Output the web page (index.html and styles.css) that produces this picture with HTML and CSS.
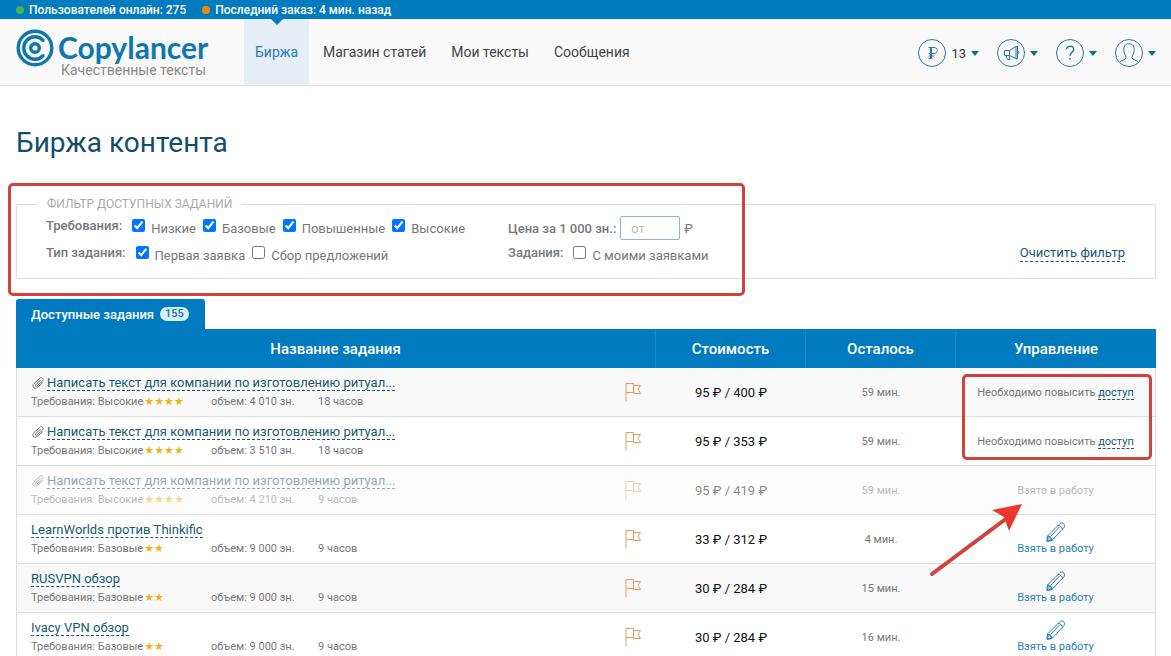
FILE: index.html
```html
<!DOCTYPE html>
<html lang="ru">
<head>
  <meta charset="UTF-8">
  <meta name="viewport" content="width=device-width, initial-scale=1.0">
  <title>Биржа контента - Copylancer</title>
  <link rel="stylesheet" href="styles.css">
</head>
<body>
  <!-- Icons -->
  <svg class="sprite" aria-hidden="true">
    <symbol id="clip" viewBox="0 0 14 14">
      <path d="M9.500 4 4.500 9c-.8.8.4 2 1.200 1.200L11.500 5c1.800-2-.8-4.500-2.700-2.700L3 7.500c-2.800 2.500.2 6.500 3.200 4L12 6.500"/>
    </symbol>
    <symbol id="flag" viewBox="0 0 16 19">
      <path d="M1 18.500V.5h7.500v9H1M8.500 2.500h7L13 6l2.500 4.500h-7v-1"/>
    </symbol>
    <symbol id="pencil" viewBox="0 0 20 20">
      <path d="M1 19.500 1.500 14 14 1.500c2.500-2 6 1.500 4 4L6 18.500zM12 3.500c2.500 0 4.500 2 4.500 4.200M1.500 14c2.500 0 4.500 2 4.500 4.500M4.500 14.500 13.500 5"/>
      <path class="tip" d="M1.500 14.500 4.500 15.500 5.500 18.200 1.200 19z"/>
    </symbol>
  </svg>

  <div class="topbar">
    <span class="dot green"></span><span class="online">Пользователей онлайн: 275</span>
    <span class="dot orange"></span><span>Последний заказ: 4 мин. назад</span>
  </div>

  <header>
    <a class="logo" href="#">
      <svg viewBox="0 0 38 38" width="38" height="38" aria-hidden="true">
        <circle cx="19" cy="19" r="16.800"/>
        <path d="M27 11.200A11.200 11.200 0 1 0 27 26.800"/>
        <circle cx="19" cy="19" r="4.300"/>
      </svg>
      <span class="logo-text">
        <span class="name">Copylancer</span>
        <span class="slogan">Качественные тексты</span>
      </span>
    </a>
    <nav>
      <a class="active" href="#">Биржа</a>
      <a href="#">Магазин статей</a>
      <a href="#">Мои тексты</a>
      <a href="#">Сообщения</a>
    </nav>
    <div class="tools">
      <button type="button" aria-label="Баланс">
        <svg class="round" viewBox="0 0 28 28"><circle cx="14" cy="14" r="13.500"/><path d="M12.500 19.500v-11M10.500 8.500h5.500c4.300 0 4.300 6 0 6h-5.500M10.500 17h6M10.500 19.500h4M13.500 8.500v11"/></svg>
        <span>13</span><i class="caret"></i>
      </button>
      <button type="button" aria-label="Новости">
        <svg class="round" viewBox="0 0 28 28"><circle cx="14" cy="14" r="13.500"/><path d="M7.500 11.500h5L19 7.500v12l-6.500-3h-5zM12.500 11.500v5M19 7.500l1.500-.5v13l-1.500-.5M20.500 12c2 0 2 3 0 3M9 16.500l1.500 4h2.500l-1-4"/></svg>
        <i class="caret"></i>
      </button>
      <button type="button" aria-label="Помощь">
        <svg class="round" viewBox="0 0 28 28"><circle cx="14" cy="14" r="13.500"/><path class="bold" d="M10.500 10.500c.3-4.200 7.200-4.200 7.200 0 0 2.800-3.700 3-3.700 6.300M14 19v1.500"/></svg>
        <i class="caret"></i>
      </button>
      <button type="button" aria-label="Профиль">
        <svg class="round" viewBox="0 0 28 28"><circle cx="14" cy="14" r="13.500"/><path d="M4.500 23.500c1.500-2.500 6-2.700 6.500-4.500.3-1.500-.5-2.500-1.300-4C8.500 12 8.500 9 9.500 7c1.500-3 7.500-3 9 0 1 2 1 5-.2 8-.8 1.500-1.600 2.500-1.300 4 .5 1.800 5 2 6.500 4.500"/></svg>
        <i class="caret"></i>
      </button>
    </div>
  </header>

  <main>
    <h1>Биржа контента</h1>

    <form class="filter">
      <fieldset>
        <legend>ФИЛЬТР ДОСТУПНЫХ ЗАДАНИЙ</legend>
        <div class="filter-body">
          <div class="col-left">
            <div class="line">
              <b>Требования:</b>
              <label><input type="checkbox" checked><span>Низкие</span></label>
              <label><input type="checkbox" checked><span>Базовые</span></label>
              <label><input type="checkbox" checked><span>Повышенные</span></label>
              <label><input type="checkbox" checked><span>Высокие</span></label>
            </div>
            <div class="line">
              <b>Тип задания:</b>
              <label><input type="checkbox" checked><span>Первая заявка</span></label>
              <label><input type="checkbox"><span>Сбор предложений</span></label>
            </div>
          </div>
          <div class="col-mid">
            <div class="line price-line">
              <label for="price"><b>Цена за 1 000 зн.:</b></label>
              <input type="text" id="price" placeholder="от">
              <span class="rub">₽</span>
            </div>
            <div class="line">
              <b>Задания:</b>
              <label><input type="checkbox"><span>С моими заявками</span></label>
            </div>
          </div>
          <a class="dashed clear" href="#">Очистить фильтр</a>
        </div>
      </fieldset>
      <div class="mark mark-filter"></div>
    </form>

    <div class="tasks">
      <a class="tab" href="#">Доступные задания <span class="count">155</span></a>
      <table>
        <colgroup>
          <col>
          <col class="w150">
          <col class="w150">
          <col class="w200">
        </colgroup>
        <thead>
          <tr>
            <th>Название задания</th>
            <th>Стоимость</th>
            <th>Осталось</th>
            <th>Управление</th>
          </tr>
        </thead>
        <tbody>
          <tr>
            <td>
              <div class="task">
                <div>
                  <div class="title"><svg class="clip"><use href="#clip"/></svg><a class="dashed" href="#">Написать текст для компании по изготовлению ритуал...</a></div>
                  <div class="meta"><span>Требования: Высокие<i class="stars">★★★★</i></span><span>объем: 4 010 зн.</span><span>18 часов</span></div>
                </div>
                <svg class="flag"><use href="#flag"/></svg>
              </div>
            </td>
            <td class="price">95 ₽ / 400 ₽</td>
            <td class="left">59 мин.</td>
            <td class="action">Необходимо повысить <a class="dashed" href="#">доступ</a></td>
          </tr>
          <tr>
            <td>
              <div class="task">
                <div>
                  <div class="title"><svg class="clip"><use href="#clip"/></svg><a class="dashed" href="#">Написать текст для компании по изготовлению ритуал...</a></div>
                  <div class="meta"><span>Требования: Высокие<i class="stars">★★★★</i></span><span>объем: 3 510 зн.</span><span>18 часов</span></div>
                </div>
                <svg class="flag"><use href="#flag"/></svg>
              </div>
            </td>
            <td class="price">95 ₽ / 353 ₽</td>
            <td class="left">59 мин.</td>
            <td class="action">Необходимо повысить <a class="dashed" href="#">доступ</a></td>
          </tr>
          <tr class="taken">
            <td>
              <div class="task">
                <div>
                  <div class="title"><svg class="clip"><use href="#clip"/></svg><a class="dashed" href="#">Написать текст для компании по изготовлению ритуал...</a></div>
                  <div class="meta"><span>Требования: Высокие<i class="stars">★★★★</i></span><span>объем: 4 210 зн.</span><span>9 часов</span></div>
                </div>
                <svg class="flag"><use href="#flag"/></svg>
              </div>
            </td>
            <td class="price"><span>95 ₽ / 419 ₽</span></td>
            <td class="left"><span>59 мин.</span></td>
            <td class="action"><span>Взято в работу</span></td>
          </tr>
          <tr>
            <td>
              <div class="task">
                <div>
                  <div class="title"><a class="dashed" href="#">LearnWorlds против Thinkific</a></div>
                  <div class="meta"><span>Требования: Базовые<i class="stars">★★</i></span><span>объем: 9 000 зн.</span><span>9 часов</span></div>
                </div>
                <svg class="flag"><use href="#flag"/></svg>
              </div>
            </td>
            <td class="price">33 ₽ / 312 ₽</td>
            <td class="left">4 мин.</td>
            <td class="action"><a class="take" href="#"><svg><use href="#pencil"/></svg>Взять в работу</a></td>
          </tr>
          <tr>
            <td>
              <div class="task">
                <div>
                  <div class="title"><a class="dashed" href="#">RUSVPN обзор</a></div>
                  <div class="meta"><span>Требования: Базовые<i class="stars">★★</i></span><span>объем: 9 000 зн.</span><span>9 часов</span></div>
                </div>
                <svg class="flag"><use href="#flag"/></svg>
              </div>
            </td>
            <td class="price">30 ₽ / 284 ₽</td>
            <td class="left">15 мин.</td>
            <td class="action"><a class="take" href="#"><svg><use href="#pencil"/></svg>Взять в работу</a></td>
          </tr>
          <tr>
            <td>
              <div class="task">
                <div>
                  <div class="title"><a class="dashed" href="#">Ivacy VPN обзор</a></div>
                  <div class="meta"><span>Требования: Базовые<i class="stars">★★</i></span><span>объем: 9 000 зн.</span><span>9 часов</span></div>
                </div>
                <svg class="flag"><use href="#flag"/></svg>
              </div>
            </td>
            <td class="price">30 ₽ / 284 ₽</td>
            <td class="left">16 мин.</td>
            <td class="action"><a class="take" href="#"><svg><use href="#pencil"/></svg>Взять в работу</a></td>
          </tr>
        </tbody>
      </table>
      <div class="mark mark-access"></div>
      <svg class="arrow" viewBox="0 0 94 74" aria-hidden="true">
        <path class="shaft" d="M3 71 78 15"/>
        <path class="head" d="M93 1 63 7 75 14 80 28z"/>
      </svg>
    </div>
  </main>
</body>
</html>
```

FILE: styles.css
```css
* {
  box-sizing: border-box;
}
body {
  margin: 0;
  font-family: Roboto, "Open Sans", sans-serif;
  font-size: 13px;
  color: #777;
  background: #fff;
}
a {
  color: #1b5873;
  text-decoration: none;
}
.sprite {
  display: none;
}
svg {
  fill: none;
  stroke: currentColor;
  flex: none;
}

/* Top bar */
.topbar {
  display: flex;
  align-items: center;
  height: 19px;
  padding: 0 16px;
  background: #007bc0;
  color: #fff;
  font-size: 12px;
  font-weight: 500;
}
.dot {
  width: 8px;
  height: 8px;
  margin-right: 5px;
  border-radius: 50%;
}
.green {
  background: #4caf50;
}
.orange {
  background: #ef8a0c;
}
.online {
  margin-right: 16px;
}

/* Header */
header {
  display: flex;
  height: 67px;
  padding: 0 15px 0 16px;
  background: #f9f9f9;
  border-bottom: 1px solid #e4e4e4;
}
.logo {
  display: flex;
  width: 228px;
  padding-top: 10px;
  color: #0f76b0;
}
.logo svg {
  margin-right: 4px;
  stroke-width: 3.4;
  stroke-linecap: round;
}
.logo-text {
  display: flex;
  flex-direction: column;
}
.name {
  font-family: Lato, sans-serif;
  font-size: 30px;
  font-weight: 700;
  line-height: 36px;
}
.slogan {
  padding-left: 3px;
  color: #8a8a8a;
  font-size: 14px;
  line-height: 10px;
}
nav {
  display: flex;
  gap: 3px;
}
nav a {
  padding: 0 11px;
  color: #444;
  font-size: 14px;
  line-height: 66px;
}
nav .active {
  position: relative;
  color: #2a7ab5;
  background: #e6eef6;
}
nav .active::before {
  content: "";
  position: absolute;
  top: 0;
  left: 50%;
  margin-left: -6px;
  border: 6px solid transparent;
  border-top-color: #007bc0;
  border-bottom: 0;
}
.tools {
  display: flex;
  align-items: center;
  gap: 18px;
  margin-left: auto;
  padding-top: 2px;
}
.tools button {
  display: flex;
  align-items: center;
  gap: 5px;
  padding: 0;
  border: 0;
  background: none;
  color: #333;
  font: inherit;
}
.round {
  width: 28px;
  height: 28px;
  color: #2a77a8;
}
.round .bold {
  stroke-width: 1.5;
}
.caret {
  border: 4px solid transparent;
  border-top: 5px solid #0d6a94;
  border-bottom: 0;
}

/* Filter */
main {
  padding: 0 15px 0 16px;
}
h1 {
  margin: 38px 0 34px;
  color: #124e68;
  font-size: 28px;
  font-weight: 400;
  line-height: 38px;
}
.filter {
  position: relative;
}
fieldset {
  min-width: 0;
  margin: 0;
  padding: 0 20px;
  border: 1px solid #ddd;
  border-radius: 2px;
}
legend {
  padding: 0 10px;
  color: #aaa;
  font-size: 12px;
  line-height: 16px;
}
.filter-body {
  display: flex;
  height: 66px;
  padding: 0 10px 0 9px;
}
.col-left {
  width: 462px;
}
.line {
  display: flex;
  align-items: flex-start;
  height: 27px;
  padding-top: 4px;
  white-space: nowrap;
}
.line b {
  margin-right: 10px;
  font-weight: 500;
  line-height: 20px;
}
.line label {
  display: flex;
  align-items: flex-start;
}
.line label span {
  margin: 0 7px 0 6px;
  line-height: 25px;
}
input[type="checkbox"] {
  width: 13px;
  height: 13px;
  margin: 3px 0 0;
}
.price-line b {
  margin-right: 4px;
  line-height: 26px;
}
#price {
  width: 60px;
  height: 24px;
  padding: 0 10px;
  border: 1px solid #8fb3d0;
  border-radius: 2px;
  font: inherit;
  color: #444;
}
#price::placeholder {
  color: #bbb;
}
.rub {
  margin-left: 4px;
  line-height: 26px;
}
.dashed {
  border-bottom: 1px dashed #1b5873;
}
.clear {
  align-self: flex-end;
  margin: 0 0 16px auto;
  line-height: 17px;
}

/* Tasks */
.tasks {
  position: relative;
  margin-top: 20px;
}
.tab {
  display: inline-flex;
  align-items: center;
  height: 30px;
  padding: 0 16px 0 15px;
  border-radius: 3px 3px 0 0;
  background: #007bc0;
  color: #fff;
  font-weight: 500;
  vertical-align: top;
}
.count {
  margin-left: 6px;
  padding: 0 5px;
  border-radius: 7px;
  background: #d5f1ff;
  color: #1d6d99;
  font-size: 11px;
  line-height: 14px;
}
table {
  width: 100%;
  table-layout: fixed;
  border-collapse: separate;
  border-spacing: 0;
}
.w150 {
  width: 150px;
}
.w200 {
  width: 200px;
}
th {
  height: 39px;
  padding: 0;
  border-right: 1px solid #168ac8;
  background: #007bc0;
  color: #fff;
  font-size: 15px;
  font-weight: 500;
}
th:last-child {
  border-right: 0;
}
tbody tr:nth-child(odd) {
  background: #f8f8f8;
}
tbody tr:nth-child(even) {
  background: #fff;
}
td {
  height: 49px;
  padding: 0;
  border-bottom: 1px solid #ddd;
  text-align: center;
}
td:first-child {
  border-left: 1px solid #ddd;
}
td:last-child {
  border-right: 1px solid #ddd;
}
.task {
  display: flex;
  align-items: center;
  justify-content: space-between;
  padding: 0 15px 0 14px;
  text-align: left;
}
.title {
  display: flex;
  align-items: center;
  height: 20px;
}
.title a {
  line-height: 15px;
}
.clip {
  width: 14px;
  height: 14px;
  margin-right: 2px;
}
.meta {
  display: grid;
  grid-template-columns: 180px 107px auto;
  font-size: 11px;
  line-height: 18px;
}
.stars {
  margin-left: 1px;
  color: #edb51c;
  font-family: "DejaVu Sans", sans-serif;
  font-style: normal;
  line-height: 1;
}
.flag {
  width: 16px;
  height: 19px;
  color: #e69a5c;
}
.price {
  color: #111;
}
.left,
.action {
  font-size: 11px;
}
tbody tr.taken {
  background: #fdfdfd;
}
.taken .task,
.taken span {
  opacity: 0.5;
}
.taken .task span {
  opacity: 1;
}
.take {
  display: flex;
  flex-direction: column;
  align-items: center;
  color: #2a7fae;
  line-height: 14px;
}
.take svg {
  width: 20px;
  height: 20px;
}
.tip {
  fill: #9ed3ec;
}

/* Red highlights */
.mark {
  position: absolute;
  border: 3px solid #d2423c;
  border-radius: 5px;
  pointer-events: none;
}
.mark-filter {
  top: -13px;
  left: -8px;
  width: 737px;
  height: 113px;
}
.mark-access {
  top: 75px;
  right: 4px;
  width: 190px;
  height: 86px;
}
.arrow {
  position: absolute;
  top: 204px;
  right: 133px;
  width: 94px;
  height: 74px;
  pointer-events: none;
}
.shaft {
  stroke: #d2423c;
  stroke-width: 4;
  stroke-linecap: round;
}
.head {
  fill: #e8392f;
  stroke: none;
}
```
